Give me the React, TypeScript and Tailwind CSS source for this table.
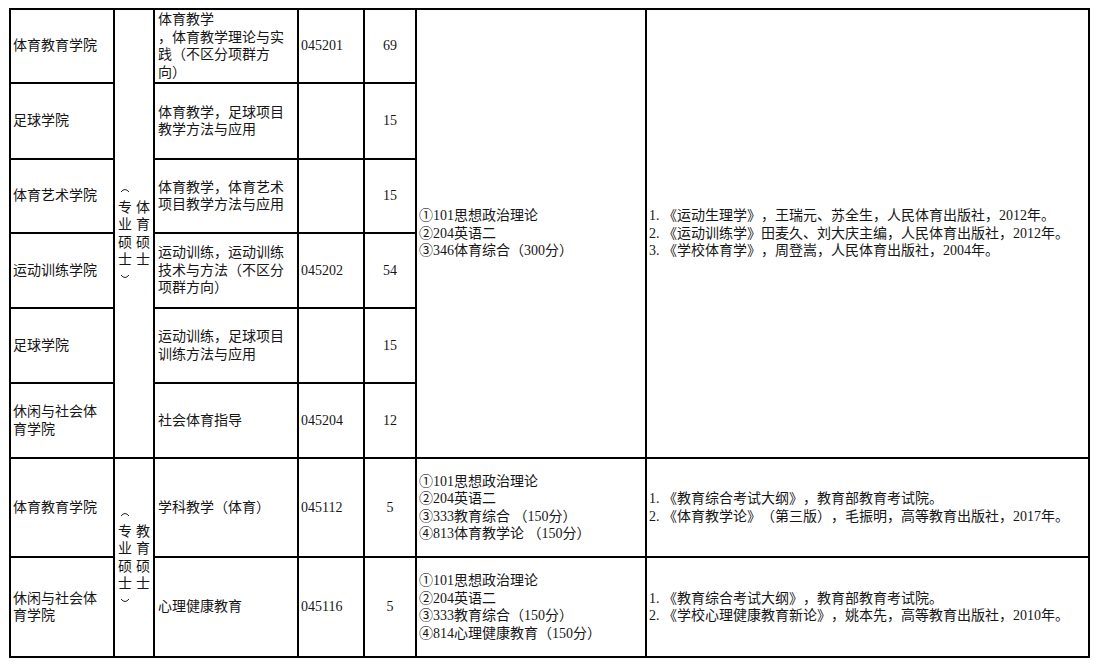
import React from "react";

const F = { fontFamily: '"Liberation Serif", "Noto Sans CJK SC", serif' };

function Arc({ down }: { down?: boolean }) {
  return (
    <span className="flex h-[17.5px] w-[14px] items-center justify-center">
      <svg width="10" height="6" viewBox="0 0 10 6">
        <path
          d={down ? "M1 1 Q5 6 9 1" : "M1 5 Q5 0 9 5"}
          fill="none"
          stroke="#222"
          strokeWidth="1"
        />
      </svg>
    </span>
  );
}

function Vert({ right }: { right: string }) {
  const left = ["专", "业", "硕", "士"];
  const r = right.split("");
  return (
    <div className="flex flex-row justify-center items-center gap-[4px] text-[14px] leading-[17.5px]">
      <div className="flex flex-col items-center">
        <Arc />
        {left.map((c, i) => (
          <span key={i}>{c}</span>
        ))}
        <Arc down />
      </div>
      <div className="flex flex-col items-center">
        {r.map((c, i) => (
          <span key={i}>{c}</span>
        ))}
      </div>
    </div>
  );
}

const td = "border-2 border-black align-middle px-[2px] py-0";

export default function App() {
  return (
    <div
      className="bg-white w-[1097px] h-[665px] pt-[8px] pl-[9px] text-[#161616] text-[14px] leading-[17.5px] [text-spacing-trim:space-all]"
      style={F}
    >
      <table className="table-fixed border-collapse w-[1079px]">
        <colgroup>
          <col className="w-[104px]" />
          <col className="w-[40px]" />
          <col className="w-[144px]" />
          <col className="w-[66px]" />
          <col className="w-[52px]" />
          <col className="w-[230px]" />
          <col className="w-[443px]" />
        </colgroup>
        <tbody>
          <tr className="h-[74px]">
            <td className={td}>体育教育学院</td>
            <td className={td + " px-0"} rowSpan={6}>
              <Vert right="体育硕士" />
            </td>
            <td className={td + " pl-[3px]"}>
              体育教学
              <br />
              ，体育教学理论与实
              <br />
              践（不区分项群方
              <br />
              向）
            </td>
            <td className={td + " px-[1px]"}>045201</td>
            <td className={td + " text-center"}>69</td>
            <td className={td} rowSpan={6}>
              ①101思想政治理论
              <br />
              ②204英语二
              <br />
              ③346体育综合（300分）
            </td>
            <td className={td} rowSpan={6}>
              1. 《运动生理学》，王瑞元、苏全生，人民体育出版社，2012年。
              <br />
              2. 《运动训练学》田麦久、刘大庆主编，人民体育出版社，2012年。
              <br />
              3. 《学校体育学》，周登嵩，人民体育出版社，2004年。
            </td>
          </tr>
          <tr className="h-[76px]">
            <td className={td}>足球学院</td>
            <td className={td + " pl-[3px]"}>
              体育教学，足球项目
              <br />
              教学方法与应用
            </td>
            <td className={td}></td>
            <td className={td + " text-center"}>15</td>
          </tr>
          <tr className="h-[74px]">
            <td className={td}>体育艺术学院</td>
            <td className={td + " pl-[3px]"}>
              体育教学，体育艺术
              <br />
              项目教学方法与应用
            </td>
            <td className={td}></td>
            <td className={td + " text-center"}>15</td>
          </tr>
          <tr className="h-[75px]">
            <td className={td}>运动训练学院</td>
            <td className={td + " pl-[3px]"}>
              运动训练，运动训练
              <br />
              技术与方法（不区分
              <br />
              项群方向）
            </td>
            <td className={td + " px-[1px]"}>045202</td>
            <td className={td + " text-center"}>54</td>
          </tr>
          <tr className="h-[75px]">
            <td className={td}>足球学院</td>
            <td className={td + " pl-[3px]"}>
              运动训练，足球项目
              <br />
              训练方法与应用
            </td>
            <td className={td}></td>
            <td className={td + " text-center"}>15</td>
          </tr>
          <tr className="h-[75px]">
            <td className={td}>
              休闲与社会体
              <br />
              育学院
            </td>
            <td className={td + " pl-[3px]"}>社会体育指导</td>
            <td className={td + " px-[1px]"}>045204</td>
            <td className={td + " text-center"}>12</td>
          </tr>
          <tr className="h-[99px]">
            <td className={td}>体育教育学院</td>
            <td className={td + " px-0"} rowSpan={2}>
              <Vert right="教育硕士" />
            </td>
            <td className={td + " pl-[3px]"}>学科教学（体育）</td>
            <td className={td + " px-[1px]"}>045112</td>
            <td className={td + " text-center"}>5</td>
            <td className={td}>
              ①101思想政治理论
              <br />
              ②204英语二
              <br />
              ③333教育综合 （150分）
              <br />
              ④813体育教学论 （150分）
            </td>
            <td className={td}>
              1. 《教育综合考试大纲》，教育部教育考试院。
              <br />
              2. 《体育教学论》（第三版），毛振明，高等教育出版社，2017年。
            </td>
          </tr>
          <tr className="h-[100px]">
            <td className={td}>
              休闲与社会体
              <br />
              育学院
            </td>
            <td className={td + " pl-[3px]"}>心理健康教育</td>
            <td className={td + " px-[1px]"}>045116</td>
            <td className={td + " text-center"}>5</td>
            <td className={td}>
              ①101思想政治理论
              <br />
              ②204英语二
              <br />
              ③333教育综合（150分）
              <br />
              ④814心理健康教育（150分）
            </td>
            <td className={td}>
              1. 《教育综合考试大纲》，教育部教育考试院。
              <br />
              2. 《学校心理健康教育新论》，姚本先，高等教育出版社，2010年。
            </td>
          </tr>
        </tbody>
      </table>
    </div>
  );
}
